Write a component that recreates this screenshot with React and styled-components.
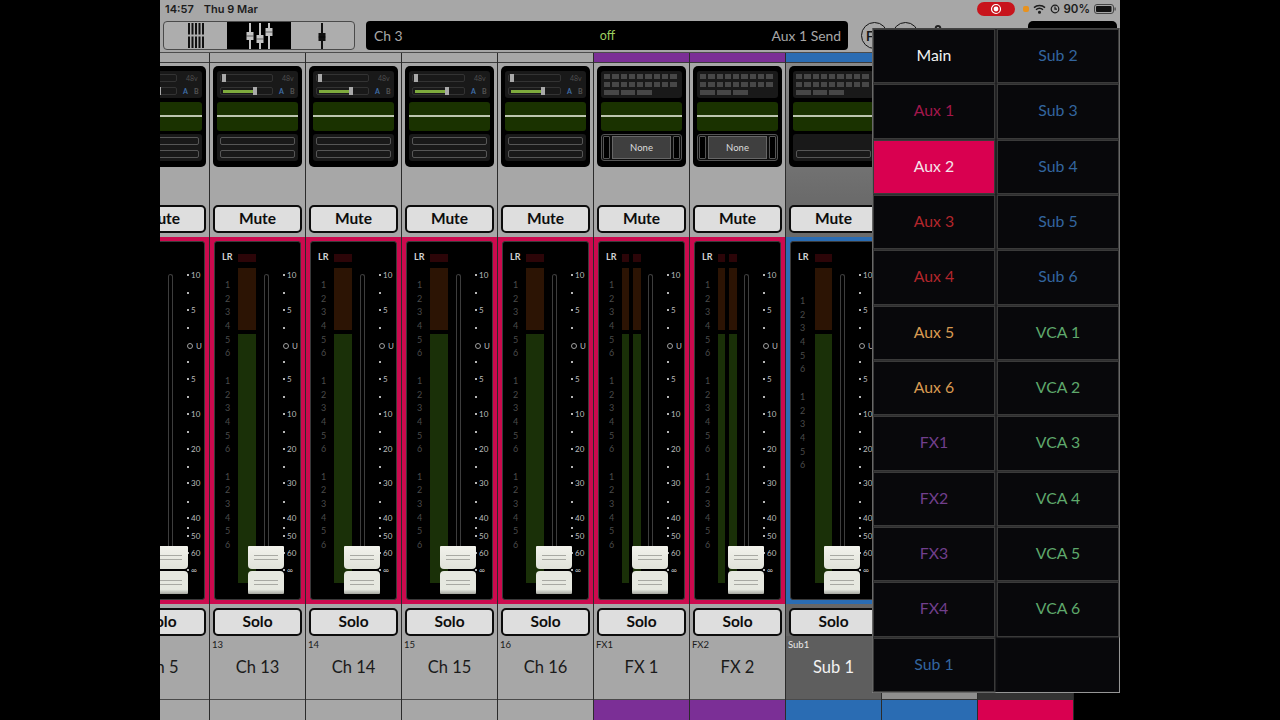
import React from 'react'
import styled, { createGlobalStyle } from 'styled-components'
import { Settings } from 'lucide-react'

const GlobalStyle = createGlobalStyle`
  html, body {
    margin: 0;
    height: 100%;
    background: #000;
    overflow: hidden;
  }
  * {
    box-sizing: border-box;
  }
`

const Page = styled.div`
  width: 1280px;
  height: 720px;
  display: flex;
  justify-content: center;
  background: #000;
  font-family: Lato, "Liberation Sans", sans-serif;
`

const Screen = styled.div`
  position: relative;
  width: 960px;
  height: 720px;
  display: flex;
  flex-direction: column;
  overflow: hidden;
  background: #a7a7a7;
`

const StatusBar = styled.div`
  height: 19px;
  flex: none;
  display: flex;
  align-items: center;
  justify-content: space-between;
  padding: 0 4px 2px 5px;
  font-family: Inter, sans-serif;
  font-size: 11px;
  font-weight: 600;
  color: #1c1c1c;
`

const Clock = styled.div`
  display: flex;
  gap: 10px;
`

const StatusIcons = styled.div`
  display: flex;
  align-items: center;
  gap: 4px;
  font-size: 11.5px;
`

const RecordPill = styled.div`
  width: 38px;
  height: 14px;
  margin-right: 4px;
  border-radius: 7px;
  background: #c8141c;
  display: flex;
  align-items: center;
  justify-content: center;
`

const OrangeDot = styled.span`
  width: 6px;
  height: 6px;
  border-radius: 2px;
  background: #e8921e;
`

const Toolbar = styled.div`
  height: 34px;
  flex: none;
  display: flex;
  align-items: center;
  padding: 0 0 0 3px;
  border-bottom: 1px solid #4c4c4c;
`

const ViewSwitch = styled.div`
  width: 192px;
  height: 29px;
  flex: none;
  display: flex;
  overflow: hidden;
  border: 1px solid #4a4a4a;
  border-radius: 4px;
  background: #adadad;
`

const ViewButton = styled.div`
  flex: 1;
  display: flex;
  align-items: center;
  justify-content: center;
  background: ${p => (p.$active ? '#000' : 'transparent')};
  color: ${p => (p.$active ? '#c4c4c4' : '#111')};
`

const ChannelBar = styled.div`
  width: 482px;
  height: 29px;
  margin-left: 11px;
  flex: none;
  display: grid;
  grid-template-columns: 1fr 1fr 1fr;
  align-items: center;
  padding: 0 7px 0 8px;
  border-radius: 4px;
  background: #000;
  font-size: 13.9px;
  color: #a8a8a8;
`

const OffLabel = styled.span`
  text-align: center;
  color: #9ccf5f;
  font-size: 12.5px;
`

const SendLabel = styled.span`
  text-align: right;
`

const ToolRight = styled.div`
  flex: 1;
  display: flex;
  align-items: center;
  margin-left: 13px;
  gap: 4px;
`

const CircleButton = styled.div`
  width: 27px;
  height: 27px;
  flex: none;
  border: 1.5px solid #151515;
  border-radius: 50%;
  display: flex;
  align-items: center;
  padding-left: 4px;
  font-size: 13px;
  font-weight: 700;
  color: #151515;
`

const GearWrap = styled.div`
  margin-left: 3px;
  display: flex;
  color: #222;
`

const BlackBox = styled.div`
  width: 89px;
  height: 30px;
  margin-left: auto;
  margin-right: 3px;
  border-radius: 5px;
  background: #000;
`

const StripRow = styled.div`
  flex: 1;
  display: flex;
  margin-left: -46px;
  min-height: 0;
`

const Strip = styled.div`
  width: 96px;
  flex: none;
  display: flex;
  flex-direction: column;
  border-right: 1px solid #2b2b2b;
  background: ${p => (p.$selected ? 'linear-gradient(#8a8a8a, #6a6a6a 150px, #666)' : '#a7a7a7')};
`

const StripTop = styled.div`
  height: 10px;
  flex: none;
  border-bottom: 1px solid #3a3a3a;
  background: ${p => p.$color || '#a7a7a7'};
`

const ProcessingCard = styled.div`
  width: 89px;
  height: 101px;
  margin: 3px 0 0 3px;
  flex: none;
  display: flex;
  flex-direction: column;
  gap: 3.5px;
  padding: 5px 4px 6px;
  border-radius: 5px;
  background: #000;
`

const CardPanel = styled.div`
  height: 27px;
  flex: none;
  border-radius: 3px;
  background: #191919;
  display: flex;
  flex-direction: column;
  justify-content: center;
  gap: 5px;
  padding: 0 3px;
`

const PreampRow = styled.div`
  display: flex;
  align-items: center;
  gap: ${p => p.$gap}px;
  font-size: 7px;
  color: #4f4f4f;
`

const TrimTrack = styled.div`
  position: relative;
  width: 53px;
  height: 8px;
  border: 1px solid #333;
  border-radius: 2px;
`

const TrimFill = styled.div`
  position: absolute;
  left: 2px;
  top: 1.5px;
  width: 31px;
  height: 3px;
  background: #7eab3d;
`

const TrimKnob = styled.div`
  position: absolute;
  top: -1px;
  left: ${p => p.$left}px;
  width: 4px;
  height: 8px;
  background: #a9a9a9;
`

const AbLabel = styled.span`
  color: ${p => (p.$on ? '#3f6ea8' : '#555')};
`

const AbGroup = styled.div`
  display: flex;
  gap: 6px;
  font-weight: 700;
`

const GateDisplay = styled.div`
  height: 29px;
  flex: none;
  border-radius: 3px;
  background: #1a3200;
  display: flex;
  align-items: center;
`

const GateLine = styled.div`
  width: 100%;
  height: 2px;
  background: #bcc5ae;
`

const OutlineBar = styled.div`
  height: 8px;
  border: 1.5px solid #565656;
  border-radius: 2px;
  visibility: ${p => (p.$hidden ? 'hidden' : 'visible')};
`

const KeyGrid = styled.div`
  display: grid;
  grid-template-columns: repeat(9, 6.3px);
  grid-auto-rows: 5.5px;
  gap: 2.5px 2px;
`

const Key = styled.div`
  background: #474747;
  grid-column: ${p => (p.$wide ? 'span 2' : 'auto')};
`

const FxPanel = styled(CardPanel)`
  flex-direction: row;
  align-items: stretch;
  gap: 2px;
  padding: 1px;
  background: #0c0c0c;
  border: 1px solid #555;
`

const FxSlot = styled.div`
  width: 7px;
  border: 1px solid #555;
  border-radius: 1px;
  background: #000;
`

const FxNone = styled.div`
  flex: 1;
  display: flex;
  align-items: center;
  justify-content: center;
  border: 1px solid #666;
  background: #3f3f3f;
  color: #dcdcdc;
  font-size: 9.5px;
`

const MuteWrap = styled.div`
  flex: none;
  height: 32px;
  margin-top: 38px;
`

const PushButton = styled.div`
  width: 89px;
  height: 28px;
  margin-left: 3px;
  padding-bottom: 3px;
  display: flex;
  align-items: center;
  justify-content: center;
  border: 2px solid #0c0c0c;
  border-radius: 5px;
  background: #dedede;
  color: #0d0d0d;
  font-size: 15.5px;
  font-weight: 700;
`

const MeterBed = styled.div`
  height: 367px;
  flex: none;
  padding: 4px;
  background: ${p => p.$color};
`

const MeterCard = styled.div`
  position: relative;
  height: 100%;
  border: 1px solid #3a3a3a;
  border-radius: 3px;
  background: #000;
  color: #4c4c4c;
`

const LrTag = styled.div`
  position: absolute;
  left: 7px;
  top: 9px;
  font-size: 9px;
  font-weight: 700;
  color: #d2d2d2;
`

const ClipLed = styled.div`
  position: absolute;
  top: 12px;
  left: ${p => p.$left}px;
  width: ${p => p.$width}px;
  height: 8px;
  background: #2c0508;
`

const MeterBar = styled.div`
  position: absolute;
  top: 26px;
  left: ${p => p.$left}px;
  width: ${p => p.$width}px;
  height: 315px;
  display: flex;
  flex-direction: column;
  gap: 4px;
`

const MeterTop = styled.div`
  height: 62px;
  flex: none;
  background: #2c1404;
`

const MeterLow = styled.div`
  flex: 1;
  background: #1a3008;
`

const SegmentColumn = styled.div`
  position: absolute;
  left: ${p => p.$left}px;
  top: ${p => p.$top}px;
  display: flex;
  flex-direction: column;
  font-size: 9px;
  opacity: 0.99;
`

const SegmentNum = styled.span`
  height: 13.7px;
  line-height: 13.7px;
`

const SegmentGap = styled.div`
  height: 13.7px;
`

const FaderSlot = styled.div`
  position: absolute;
  top: 32px;
  left: 49px;
  width: 5px;
  height: 285px;
  border: 1px solid #3d3d3d;
  border-bottom: 0;
  border-radius: 3px 3px 0 0;
`

const ScaleMark = styled.div`
  position: absolute;
  top: ${p => p.$y}px;
  left: 68px;
  display: flex;
  align-items: center;
  gap: ${p => (p.$unity ? 3 : 2)}px;
  height: 8px;
  font-size: 8px;
  color: #bdbdbd;
`

const Tick = styled.span`
  width: 2px;
  height: 2px;
  background: #b5b5b5;
`

const UnityRing = styled.span`
  width: 6px;
  height: 6px;
  border: 1px solid #a0a0a0;
  border-radius: 50%;
`

const FaderCap = styled.div`
  position: absolute;
  left: 33px;
  top: 304px;
  width: 36px;
  height: 48px;
  display: flex;
  flex-direction: column;
  gap: 2px;
`

const CapHalf = styled.div`
  flex: 1;
  display: flex;
  flex-direction: column;
  justify-content: center;
  gap: 3px;
  padding: 0 6px;
  border-radius: ${p => (p.$top ? '1px 1px 4px 4px' : '4px 4px 1px 1px')};
  background: linear-gradient(${p => (p.$top ? '#f2f2ec, #e0e2d9' : '#e6e8e0 80%, #a5a69f')});
`

const CapLine = styled.div`
  height: 1px;
  background: #a8a9a3;
`

const SoloWrap = styled.div`
  flex: none;
  height: 32px;
  padding-top: 4px;
`

const NameBlock = styled.div`
  position: relative;
  height: 64px;
  flex: none;
  display: flex;
  align-items: center;
  justify-content: center;
  padding-bottom: 1px;
  border-bottom: 1px solid #4a4a4a;
  background: ${p => (p.$selected ? '#5e5e5e' : 'transparent')};
  color: ${p => (p.$selected ? '#f2f2f2' : '#1a1a1a')};
  font-size: 16.5px;
`

const ShortName = styled.div`
  position: absolute;
  left: 2px;
  top: 3px;
  font-size: 9.5px;
  color: ${p => (p.$selected ? '#e8e8e8' : '#1a1a1a')};
`

const BottomBand = styled.div`
  flex: 1;
  background: ${p => p.$color || 'transparent'};
`

const RoutePopup = styled.div`
  position: absolute;
  left: 712px;
  top: 28px;
  width: 248px;
  height: 665px;
  display: grid;
  grid-template-columns: 1fr 1fr;
  grid-template-rows: repeat(12, 1fr);
  grid-auto-flow: column;
  gap: 3px 4px;
  padding: 1px;
  border: 1.5px solid #969696;
  border-top-color: #4a4a4a;
  background: #0b0b0e;
`

const RouteCell = styled.div`
  display: flex;
  align-items: center;
  justify-content: center;
  padding-bottom: 3px;
  box-shadow: ${p => (p.$blank ? 'none' : '0 0 0 1.5px #3a3a3a')};
  background: ${p => (p.$active ? '#d90050' : '#08080b')};
  color: ${p => p.$color};
  font-size: 15.8px;
`

const PINK = '#cc0a4e'
const BLUE = '#2a6cb3'
const PURPLE = '#7b2f96'

const strips = [
  { num: '5', name: 'Ch 5', input: true },
  { num: '13', name: 'Ch 13', input: true },
  { num: '14', name: 'Ch 14', input: true },
  { num: '15', name: 'Ch 15', input: true },
  { num: '16', name: 'Ch 16', input: true },
  { num: 'FX1', name: 'FX 1', fx: true, top: PURPLE, band: PURPLE },
  { num: 'FX2', name: 'FX 2', fx: true, top: PURPLE, band: PURPLE },
  { num: 'Sub1', name: 'Sub 1', sub: true, top: BLUE, band: BLUE },
]

const routes = [
  ['Main', '#f2f2f2'],
  ['Aux 1', '#a3174c'],
  ['Aux 2', '#f4e4ea', true],
  ['Aux 3', '#b3262c'],
  ['Aux 4', '#b3262c'],
  ['Aux 5', '#d89a52'],
  ['Aux 6', '#d89a52'],
  ['FX1', '#713f8c'],
  ['FX2', '#713f8c'],
  ['FX3', '#713f8c'],
  ['FX4', '#713f8c'],
  ['Sub 1', '#33659f'],
  ['Sub 2', '#33659f'],
  ['Sub 3', '#33659f'],
  ['Sub 4', '#33659f'],
  ['Sub 5', '#33659f'],
  ['Sub 6', '#33659f'],
  ['VCA 1', '#5fa86c'],
  ['VCA 2', '#5fa86c'],
  ['VCA 3', '#5fa86c'],
  ['VCA 4', '#5fa86c'],
  ['VCA 5', '#5fa86c'],
  ['VCA 6', '#5fa86c'],
]

const scale = [
  [29, '10'], [47], [64, '5'], [82], [100, 'U'], [116], [133, '5'], [151], [168, '10'], [186],
  [203, '20'], [221], [237, '30'], [256], [272, '40'], [282], [290, '50'], [307, '60'], [324, '∞'],
]

const FaderIcon = ({ x, y }) => (
  <g>
    <rect x={x - 1} y="1" width="2" height="26" fill="currentColor" />
    <rect x={x - 3.5} y={y} width="7" height="8" fill="currentColor" />
    <rect x={x - 3.5} y={y + 3.5} width="7" height="1" fill="#000" opacity="0.5" />
  </g>
)

const GridIcon = () => (
  <svg width="18" height="27" viewBox="0 0 18 27">
    {[1, 4.5, 8, 11.5, 15].map(x => (
      <g key={x} fill="#111">
        <rect x={x} y="1" width="2" height="11.5" />
        <rect x={x} y="14.5" width="2" height="11.5" />
      </g>
    ))}
  </svg>
)

const Preamp = () => (
  <CardPanel>
    <PreampRow $gap={9}>
      <TrimTrack>
        <TrimKnob $left={1} />
      </TrimTrack>
      <span>48v</span>
    </PreampRow>
    <PreampRow $gap={6}>
      <TrimTrack>
        <TrimFill />
        <TrimKnob $left={32} />
      </TrimTrack>
      <AbGroup>
        <AbLabel $on>A</AbLabel>
        <AbLabel>B</AbLabel>
      </AbGroup>
    </PreampRow>
  </CardPanel>
)

const Keys = () => (
  <CardPanel>
    <KeyGrid>
      {Array.from({ length: 18 }, (_, i) => <Key key={i} />)}
      <Key $wide />
      <Key $wide />
      <Key $wide />
    </KeyGrid>
  </CardPanel>
)

const Meter = ({ left, width }) => (
  <>
    <ClipLed $left={left} $width={width} />
    <MeterBar $left={left} $width={width}>
      <MeterTop />
      <MeterLow />
    </MeterBar>
  </>
)

const Segments = () => (
  <SegmentColumn $left={10} $top={36}>
    {[1, 2, 3, 4, 5, 6].map(n => <SegmentNum key={`a${n}`}>{n}</SegmentNum>)}
    <SegmentGap />
    {[1, 2, 3, 4, 5, 6].map(n => <SegmentNum key={`b${n}`}>{n}</SegmentNum>)}
    <SegmentGap />
    {[1, 2, 3, 4, 5, 6].map(n => <SegmentNum key={`c${n}`}>{n}</SegmentNum>)}
  </SegmentColumn>
)

const SubSegments = () => (
  <SegmentColumn $left={9} $top={52}>
    {[1, 2, 3, 4, 5, 6].map(n => <SegmentNum key={`a${n}`}>{n}</SegmentNum>)}
    <SegmentGap />
    {[1, 2, 3, 4, 5, 6].map(n => <SegmentNum key={`b${n}`}>{n}</SegmentNum>)}
  </SegmentColumn>
)

const ChannelStrip = ({ strip }) => {
  const bed = strip.sub ? BLUE : PINK
  return (
    <Strip $selected={strip.sub}>
      <StripTop $color={strip.top} />
      <ProcessingCard>
        {strip.input ? <Preamp /> : <Keys />}
        <GateDisplay>
          <GateLine />
        </GateDisplay>
        {strip.input && (
          <CardPanel>
            <OutlineBar />
            <OutlineBar />
          </CardPanel>
        )}
        {strip.fx && (
          <FxPanel>
            <FxSlot />
            <FxNone>None</FxNone>
            <FxSlot />
          </FxPanel>
        )}
        {strip.sub && (
          <CardPanel>
            <OutlineBar $hidden />
            <OutlineBar />
          </CardPanel>
        )}
      </ProcessingCard>
      <MuteWrap>
        <PushButton>Mute</PushButton>
      </MuteWrap>
      <MeterBed $color={bed}>
        <MeterCard>
          <LrTag>LR</LrTag>
          {strip.fx ? (
            <>
              <Meter left={23} width={7} />
              <Meter left={34} width={8} />
            </>
          ) : (
            <Meter left={strip.sub ? 24 : 23} width={strip.sub ? 17 : 18} />
          )}
          {strip.sub ? <SubSegments /> : <Segments />}
          <FaderSlot />
          {scale.map(([y, label]) => (
            <ScaleMark key={y} $y={y} $unity={label === 'U'}>
              {label === 'U' ? <UnityRing /> : <Tick />}
              {label && <span>{label}</span>}
            </ScaleMark>
          ))}
          <FaderCap>
            <CapHalf $top>
              <CapLine />
              <CapLine />
            </CapHalf>
            <CapHalf>
              <CapLine />
              <CapLine />
            </CapHalf>
          </FaderCap>
        </MeterCard>
      </MeterBed>
      <SoloWrap>
        <PushButton>Solo</PushButton>
      </SoloWrap>
      <NameBlock $selected={strip.sub}>
        <ShortName $selected={strip.sub}>{strip.num}</ShortName>
        {strip.name}
      </NameBlock>
      <BottomBand $color={strip.band} />
    </Strip>
  )
}

const ExtraStrip = styled.div`
  width: 96px;
  flex: none;
  display: flex;
  flex-direction: column;
  justify-content: flex-end;
  border-right: 1px solid #2b2b2b;
  background: ${p => p.$fill};
`

const ExtraBand = styled.div`
  height: 21px;
  border-top: 1px solid #333;
  background: ${p => p.$color};
`

const Blackout = styled.div`
  flex: 1;
  background: #000;
`

export default function App() {
  return (
    <Page>
      <GlobalStyle />
      <Screen>
        <StatusBar>
          <Clock>
            <span>14:57</span>
            <span>Thu 9 Mar</span>
          </Clock>
          <StatusIcons>
            <RecordPill>
              <svg width="12" height="12" viewBox="0 0 12 12">
                <circle cx="6" cy="6" r="4.5" fill="none" stroke="#fff" strokeWidth="1.2" />
                <circle cx="6" cy="6" r="2.4" fill="#fff" />
              </svg>
            </RecordPill>
            <OrangeDot />
            <svg width="13" height="10" viewBox="0 0 13 10" fill="none" stroke="#1c1c1c" strokeWidth="1.5">
              <path d="M1 3.6c3-2.8 8-2.8 11 0M3 5.8c2-1.7 5-1.7 7 0" />
              <circle cx="6.5" cy="8.2" r="0.8" fill="#1c1c1c" />
            </svg>
            <svg width="10" height="10" viewBox="0 0 10 10" fill="none" stroke="#1c1c1c" strokeWidth="1.2">
              <circle cx="5" cy="5" r="3.8" />
              <path d="M5 2.5v2.7h2" />
            </svg>
            <span>90%</span>
            <svg width="22" height="10" viewBox="0 0 22 10">
              <rect x="0.5" y="0.5" width="19" height="9" rx="2.5" fill="none" stroke="#444" />
              <rect x="2" y="2" width="15.5" height="6" rx="1" fill="#111" />
              <rect x="20.5" y="3.5" width="1.2" height="3" fill="#444" />
            </svg>
          </StatusIcons>
        </StatusBar>
        <Toolbar>
          <ViewSwitch>
            <ViewButton>
              <GridIcon />
            </ViewButton>
            <ViewButton $active>
              <svg width="30" height="28" viewBox="0 0 30 28">
                <FaderIcon x={6} y={10} />
                <FaderIcon x={16} y={13} />
                <FaderIcon x={25} y={6} />
              </svg>
            </ViewButton>
            <ViewButton>
              <svg width="10" height="28" viewBox="0 0 10 28">
                <FaderIcon x={5} y={11} />
              </svg>
            </ViewButton>
          </ViewSwitch>
          <ChannelBar>
            <span>Ch 3</span>
            <OffLabel>off</OffLabel>
            <SendLabel>Aux 1 Send</SendLabel>
          </ChannelBar>
          <ToolRight>
            <CircleButton>FX</CircleButton>
            <CircleButton />
            <GearWrap>
              <Settings size={24} strokeWidth={2} />
            </GearWrap>
            <BlackBox />
          </ToolRight>
        </Toolbar>
        <StripRow>
          {strips.map(strip => <ChannelStrip key={strip.num} strip={strip} />)}
          <ExtraStrip $fill="#8e8e8e">
            <ExtraBand $color={BLUE} />
          </ExtraStrip>
          <ExtraStrip $fill="#333">
            <ExtraBand $color="#d90050" />
          </ExtraStrip>
          <Blackout />
        </StripRow>
        <RoutePopup>
          {routes.map(([label, color, active]) => (
            <RouteCell key={label} $color={color} $active={active}>{label}</RouteCell>
          ))}
          <RouteCell $blank />
        </RoutePopup>
      </Screen>
    </Page>
  )
}
